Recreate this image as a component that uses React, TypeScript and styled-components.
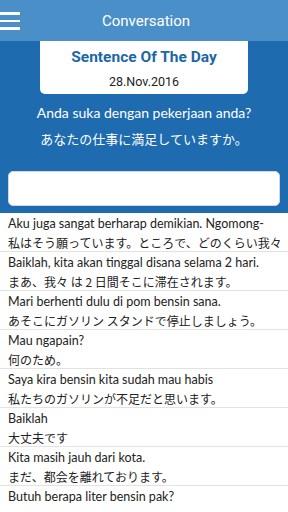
import React from "react";
import styled, { createGlobalStyle } from "styled-components";

const Global = createGlobalStyle`
  html, body { margin: 0; padding: 0; background: #fff; }
  body { width: 288px; height: 512px; overflow: hidden; }
  * { box-sizing: border-box; }
`;

const Page = styled.div`
  width: 288px;
  height: 512px;
  display: flex;
  flex-direction: column;
  overflow: hidden;
  background: #fff;
`;

const Header = styled.div`
  height: 41px;
  background: #4a8fc7;
  display: flex;
  align-items: center;
  justify-content: center;
  position: relative;
  flex-shrink: 0;
`;

const Title = styled.div`
  color: #fff;
  font-family: Roboto, "Noto Sans", sans-serif;
  font-size: 15px;
  margin-left: 4px;
  margin-top: 1px;
`;

const Burger = styled.div`
  position: absolute;
  left: 0;
  top: 12px;
  width: 20px;
  display: flex;
  flex-direction: column;
  gap: 5px;
`;

const BurgerLine = styled.div`
  height: 2.5px;
  background: #fff;
`;

const Hero = styled.div`
  background: #1e6bb0;
  display: flex;
  flex-direction: column;
  align-items: center;
  padding-bottom: 7px;
  flex-shrink: 0;
`;

const Card = styled.div`
  width: 208px;
  height: 53px;
  background: #fff;
  border-radius: 0 0 5px 5px;
  display: flex;
  flex-direction: column;
  align-items: center;
  padding-top: 6px;
`;

const CardTitle = styled.div`
  color: #1c68a6;
  font-family: Roboto, "Noto Sans", sans-serif;
  font-weight: 700;
  font-size: 15.5px;
  line-height: 20px;
`;

const CardDate = styled.div`
  color: #222;
  font-family: Roboto, "Noto Sans", sans-serif;
  font-size: 12.5px;
  line-height: 16px;
  margin-top: 7px;
`;

const HeroText = styled.div<{ $jp?: boolean }>`
  color: #fff;
  font-family: Lato, "Noto Sans CJK JP", sans-serif;
  font-size: ${(p) => (p.$jp ? "13px" : "14px")};
  line-height: 24px;
  margin-top: ${(p) => (p.$jp ? "2px" : "7px")};
`;

const Search = styled.div`
  width: 272px;
  height: 35px;
  background: #fff;
  border-radius: 5px;
  border: 1px solid #cfd8e0;
  margin-top: 20px;
`;

const List = styled.div`
  display: flex;
  flex-direction: column;
`;

const Row = styled.div`
  height: 39px;
  border-bottom: 1px solid #e2e2e2;
  padding: 1px 0 0 8px;
  display: flex;
  flex-direction: column;
  white-space: nowrap;
  overflow: hidden;
  flex-shrink: 0;
`;

const Id = styled.div`
  color: #222;
  font-family: Lato, "Noto Sans", sans-serif;
  font-size: 12.5px;
  line-height: 19px;
`;

const Jp = styled.div`
  color: #222;
  font-family: "Noto Sans CJK JP", sans-serif;
  font-size: 12px;
  line-height: 19px;
`;

const rows: [string, string | null][] = [
  ["Aku juga sangat berharap demikian. Ngomong-", "私はそう願っています。ところで、どのくらい我々"],
  ["Baiklah, kita akan tinggal disana selama 2 hari.", "まあ、我々 は 2 日間そこに滞在されます。"],
  ["Mari berhenti dulu di pom bensin sana.", "あそこにガソリン スタンドで停止しましょう。"],
  ["Mau ngapain?", "何のため。"],
  ["Saya kira bensin kita sudah mau habis", "私たちのガソリンが不足だと思います。"],
  ["Baiklah", "大丈夫です"],
  ["Kita masih jauh dari kota.", "まだ、都会を離れております。"],
  ["Butuh berapa liter bensin pak?", null],
];

export default function App() {
  return (
    <>
      <Global />
      <Page>
        <Header>
          <Burger>
            <BurgerLine />
            <BurgerLine />
            <BurgerLine />
          </Burger>
          <Title>Conversation</Title>
        </Header>
        <Hero>
          <Card>
            <CardTitle>Sentence Of The Day</CardTitle>
            <CardDate>28.Nov.2016</CardDate>
          </Card>
          <HeroText>Anda suka dengan pekerjaan anda?</HeroText>
          <HeroText $jp>あなたの仕事に満足していますか。</HeroText>
          <Search />
        </Hero>
        <List>
          {rows.map(([a, b], i) => (
            <Row key={i}>
              <Id>{a}</Id>
              {b && <Jp>{b}</Jp>}
            </Row>
          ))}
        </List>
      </Page>
    </>
  );
}
